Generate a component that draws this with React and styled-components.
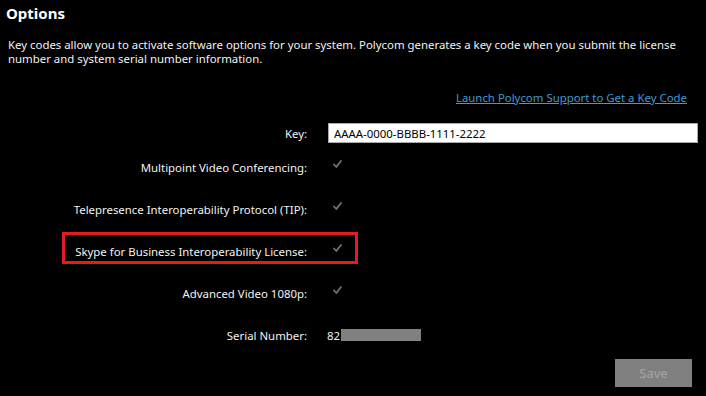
import React from 'react';
import styled, { createGlobalStyle } from 'styled-components';

const GlobalStyle = createGlobalStyle`
  html, body { margin: 0; padding: 0; background: #000; }
  body { font-family: "Noto Sans", "Open Sans", sans-serif; color: #f2f2f2; }
`;

const Page = styled.div`
  width: 706px;
  height: 396px;
  background: #000;
  box-sizing: border-box;
  padding: 3px 8px 0 8px;
  display: flex;
  flex-direction: column;
`;

const Title = styled.h1`
  margin: 0 0 0 -2px;
  font-size: 15px;
  font-weight: 700;
  line-height: 20px;
  color: #fff;
`;

const Intro = styled.p`
  margin: 15px 0 0 0;
  font-size: 11.4px;
  line-height: 14px;
  color: #f2f2f2;
`;

const LinkRow = styled.div`
  display: flex;
  justify-content: flex-end;
  margin: 25px 11px 0 0;
`;

const SupportLink = styled.a`
  font-size: 11.4px;
  line-height: 14px;
  color: #3d9bd6;
  text-decoration: underline;
  cursor: pointer;
`;

const Form = styled.div`
  display: flex;
  flex-direction: column;
  margin-top: 15px;
`;

const Row = styled.div`
  position: relative;
  display: flex;
  align-items: center;
  height: ${p => p.h}px;
`;

const Highlight = styled.div`
  position: absolute;
  left: 54px;
  top: 2px;
  width: 296px;
  height: 32px;
  box-sizing: border-box;
  border: 3px solid #e21b24;
  pointer-events: none;
`;

const Label = styled.div`
  width: 299px;
  text-align: right;
  font-size: 11.4px;
  color: #f2f2f2;
  flex-shrink: 0;
`;

const Value = styled.div`
  margin-left: ${p => p.gap}px;
  display: flex;
  align-items: center;
  font-size: 11.4px;
  color: #f2f2f2;
`;

const KeyInput = styled.input`
  width: 370px;
  height: 20px;
  box-sizing: border-box;
  border: 1px solid #a9a9a9;
  background: #fff;
  padding: 0 5px;
  font-family: "Noto Sans", sans-serif;
  font-size: 11.4px;
  color: #000;
  outline: none;
`;

const Check = styled.svg`
  width: 9px;
  height: 8px;
  margin-top: -6px;
`;

const Masked = styled.span`
  display: inline-block;
  width: 80px;
  height: 12px;
  background: #808080;
  margin-left: 1px;
`;

const Footer = styled.div`
  display: flex;
  justify-content: flex-end;
  margin: 3px 6px 0 0;
`;

const SaveButton = styled.button`
  width: 77px;
  height: 28px;
  border: none;
  background: #808080;
  color: #a6a6a6;
  font-family: "Noto Sans", sans-serif;
  font-size: 13px;
  cursor: default;
`;

function CheckMark() {
  return (
    <Check viewBox="0 0 9 8">
      <path d="M1 4.5 L3.3 7 L8 1" fill="none" stroke="#727272" strokeWidth="1.8" strokeLinecap="round" strokeLinejoin="round" />
    </Check>
  );
}

const options = [
  { label: 'Multipoint Video Conferencing:' },
  { label: 'Telepresence Interoperability Protocol (TIP):' },
  { label: 'Skype for Business Interoperability License:', highlight: true },
  { label: 'Advanced Video 1080p:' },
];

export default function App() {
  return (
    <Page>
      <GlobalStyle />
      <Title>Options</Title>
      <Intro>
        Key codes allow you to activate software options for your system. Polycom generates a key code when you submit the license
        <br />
        number and system serial number information.
      </Intro>
      <LinkRow>
        <SupportLink>Launch Polycom Support to Get a Key Code</SupportLink>
      </LinkRow>
      <Form>
        <Row h={26}>
          <Label>Key:</Label>
          <Value gap={21}>
            <KeyInput defaultValue="AAAA-0000-BBBB-1111-2222" />
          </Value>
        </Row>
        {options.map(o => (
          <Row key={o.label} h={42}>
            {o.highlight && <Highlight />}
            <Label>{o.label}</Label>
            <Value gap={26}>
              <CheckMark />
            </Value>
          </Row>
        ))}
        <Row h={42}>
          <Label>Serial Number:</Label>
          <Value gap={20}>
            82<Masked />
          </Value>
        </Row>
      </Form>
      <Footer>
        <SaveButton>Save</SaveButton>
      </Footer>
    </Page>
  );
}
